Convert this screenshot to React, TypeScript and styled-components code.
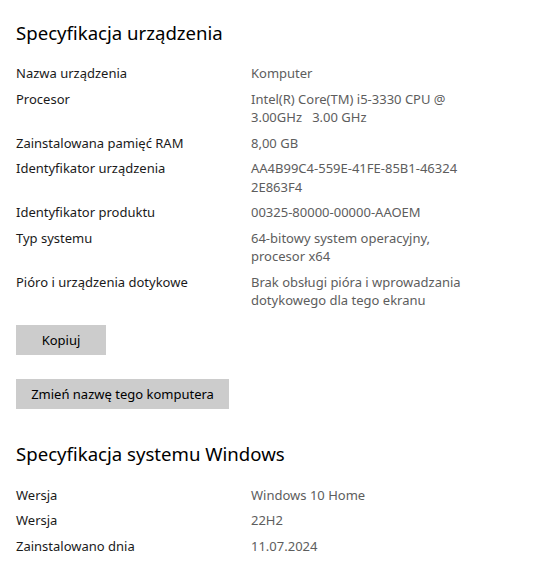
import React from "react";
import styled, { createGlobalStyle } from "styled-components";

const Global = createGlobalStyle`
  html, body { margin: 0; padding: 0; background: #ffffff; }
  body { font-family: "Noto Sans", "Open Sans", sans-serif; color: #000; }
`;

const Page = styled.div`
  width: 549px;
  height: 565px;
  overflow: hidden;
  padding: 20px 16px 0 16px;
  box-sizing: border-box;
  display: flex;
  flex-direction: column;
`;

const Heading = styled.h2<{ $top?: number }>`
  margin: ${(p) => p.$top ?? 0}px 0 0 0;
  font-weight: 400;
  font-size: 18.6px;
  line-height: 26px;
  color: #000;
`;

const Table = styled.div<{ $top: number }>`
  margin-top: ${(p) => p.$top}px;
  display: flex;
  flex-direction: column;
  gap: 7px;
`;

const Row = styled.div`
  display: grid;
  grid-template-columns: 235px 240px;
  font-size: 13px;
  line-height: 18.5px;
`;

const Label = styled.div`
  color: #1a1a1a;
`;

const Value = styled.div`
  color: #5d5d5d;
  white-space: pre-wrap;
`;

const Button = styled.button<{ $width: number; $top: number }>`
  margin-top: ${(p) => p.$top}px;
  width: ${(p) => p.$width}px;
  height: 30px;
  border: none;
  background: #cccccc;
  font-family: inherit;
  font-size: 13px;
  color: #000;
  padding: 0;
  align-self: flex-start;
`;

const device: [string, string][] = [
  ["Nazwa urządzenia", "Komputer"],
  ["Procesor", "Intel(R) Core(TM) i5-3330 CPU @\n3.00GHz   3.00 GHz"],
  ["Zainstalowana pamięć RAM", "8,00 GB"],
  ["Identyfikator urządzenia", "AA4B99C4-559E-41FE-85B1-46324\n2E863F4"],
  ["Identyfikator produktu", "00325-80000-00000-AAOEM"],
  ["Typ systemu", "64-bitowy system operacyjny,\nprocesor x64"],
  ["Pióro i urządzenia dotykowe", "Brak obsługi pióra i wprowadzania\ndotykowego dla tego ekranu"],
];

const windows: [string, string][] = [
  ["Wersja", "Windows 10 Home"],
  ["Wersja", "22H2"],
  ["Zainstalowano dnia", "11.07.2024"],
];

export default function App() {
  return (
    <>
      <Global />
      <Page>
        <Heading>Specyfikacja urządzenia</Heading>
        <Table $top={18}>
          {device.map(([l, v], i) => (
            <Row key={i}>
              <Label>{l}</Label>
              <Value>{v}</Value>
            </Row>
          ))}
        </Table>
        <Button $width={90} $top={15}>Kopiuj</Button>
        <Button $width={213} $top={24}>Zmień nazwę tego komputera</Button>
        <Heading $top={32}>Specyfikacja systemu Windows</Heading>
        <Table $top={19}>
          {windows.map(([l, v], i) => (
            <Row key={i}>
              <Label>{l}</Label>
              <Value>{v}</Value>
            </Row>
          ))}
        </Table>
      </Page>
    </>
  );
}
